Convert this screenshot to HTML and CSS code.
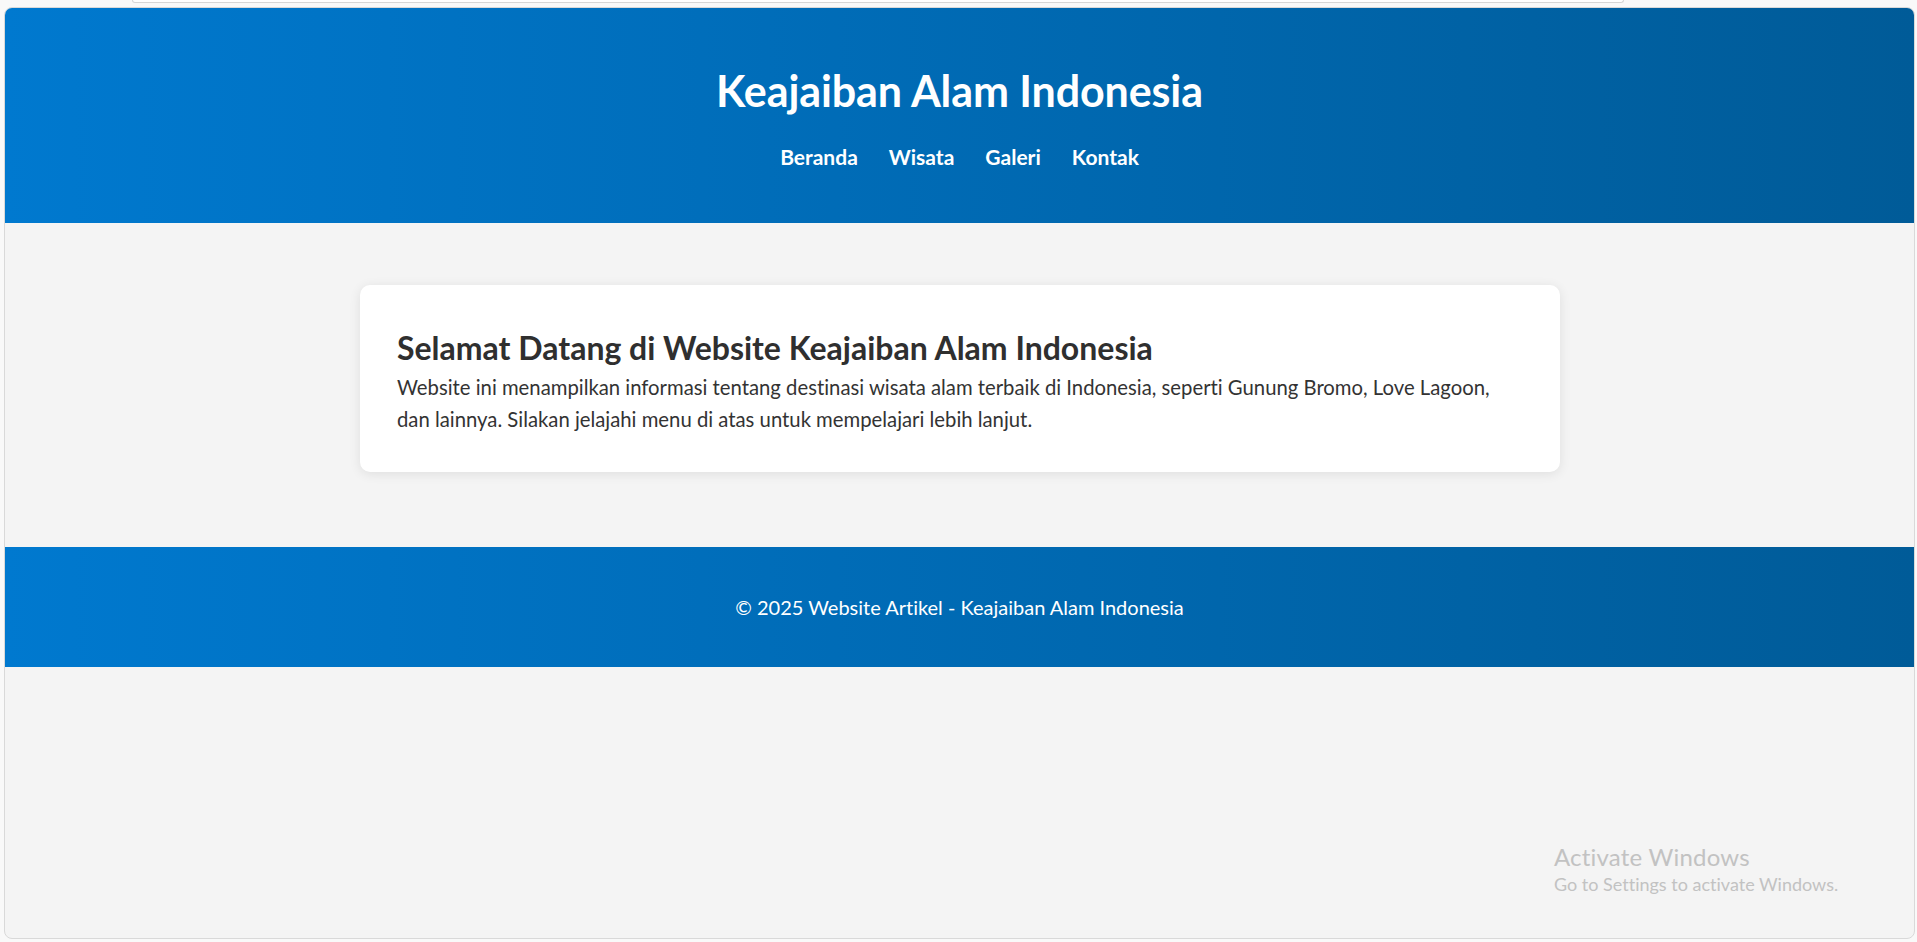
FILE: index.html
```html
<!DOCTYPE html>
<html lang="id">
<head>
<meta charset="utf-8">
<title>Keajaiban Alam Indonesia</title>
<link rel="stylesheet" href="styles.css">
</head>
<body>
<div class="topbar"></div>
<div class="viewport">
  <header class="site-header">
    <h1 class="site-title">Keajaiban Alam Indonesia</h1>
    <nav class="site-nav">
      <a href="#">Beranda</a>
      <a href="#">Wisata</a>
      <a href="#">Galeri</a>
      <a href="#">Kontak</a>
    </nav>
  </header>
  <main class="site-main">
    <section class="card">
      <h2 class="card-title">Selamat Datang di Website Keajaiban Alam Indonesia</h2>
      <p class="card-text">Website ini menampilkan informasi tentang destinasi wisata alam terbaik di Indonesia, seperti Gunung Bromo, Love Lagoon, dan lainnya. Silakan jelajahi menu di atas untuk mempelajari lebih lanjut.</p>
    </section>
  </main>
  <footer class="site-footer">
    <p class="footer-text">© 2025 Website Artikel - Keajaiban Alam Indonesia</p>
  </footer>
  <div class="watermark">
    <div class="wm-title">Activate Windows</div>
    <div class="wm-sub">Go to Settings to activate Windows.</div>
  </div>
</div>
</body>
</html>
```
FILE: styles.css
```css
html, body {
  margin: 0;
  padding: 0;
}
body {
  background: #f9f9f9;
  font-family: Lato, "Open Sans", sans-serif;
  font-variant-ligatures: none;
  color: #333;
  height: 942px;
  overflow: hidden;
}
.topbar {
  margin-left: 132px;
  width: 1490px;
  height: 2px;
  background: #fff;
  border: 1px solid #d6d6d6;
  border-top: none;
  border-radius: 0 0 8px 8px;
}
.viewport {
  position: relative;
  margin: 4px 2px 0 4px;
  height: 930px;
  border: 1px solid #d9d9d9;
  border-radius: 8px;
  overflow: hidden;
  background: #f4f4f4;
}
.site-header {
  background: linear-gradient(90deg, #0079cf 0%, #005b98 100%);
  color: #fff;
  text-align: center;
  padding: 57px 0 53px;
}
.site-title {
  margin: 0;
  font-size: 43px;
  line-height: 52px;
  font-weight: 700;
  letter-spacing: -0.1px;
}
.site-nav {
  margin-top: 27px;
  display: flex;
  justify-content: center;
  gap: 31px;
}
.site-nav a {
  color: #fff;
  text-decoration: none;
  font-weight: 700;
  font-size: 21px;
  line-height: 26px;
}
.site-main {
  padding: 62px 0 75px;
}
.card {
  max-width: 1125px;
  margin: 0 auto;
  padding: 44px 37.5px 37px;
  background: #fff;
  border-radius: 10px;
  box-shadow: 0 2px 12px rgba(0, 0, 0, 0.09);
}
.card-title {
  margin: 0;
  font-size: 32px;
  line-height: 38px;
  font-weight: 700;
  color: #2f2f2f;
}
.card-text {
  margin: 4px 0 0;
  font-size: 20.3px;
  line-height: 32px;
  color: #333;
}
.site-footer {
  background: linear-gradient(90deg, #0079cf 0%, #005b98 100%);
  color: #fff;
  text-align: center;
  padding: 48px 0;
}
.footer-text {
  margin: 0;
  font-size: 20px;
  line-height: 24px;
}
.watermark {
  position: absolute;
  left: 1549px;
  top: 834px;
  color: #c2c2c2;
  pointer-events: none;
}
.wm-title {
  font-size: 24px;
  line-height: 30px;
  letter-spacing: 0.2px;
}
.wm-sub {
  font-size: 18px;
  line-height: 24px;
}
```
